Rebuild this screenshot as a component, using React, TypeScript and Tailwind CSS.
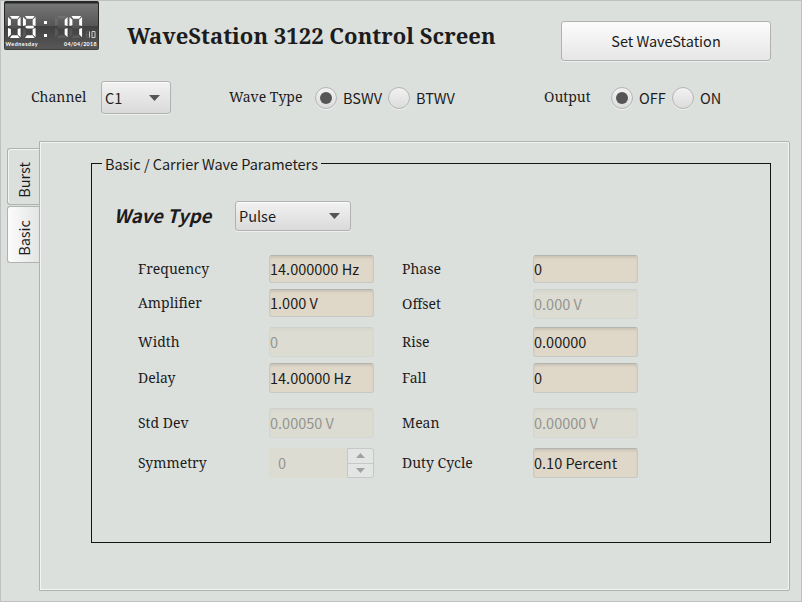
import React from "react";

const serif = "font-['Noto_Serif','Droid_Serif','DejaVu_Serif_Condensed','DejaVu_Serif',serif] [font-stretch:75%]";
const sans = "font-['Noto_Sans_CJK_SC',sans-serif]";

function Label({ text, className = "" }: { text: string; className?: string }) {
  return (
    <span className={`${serif} block whitespace-nowrap text-[14px] leading-5 text-[#1c1c1c] ${className}`}>{text}</span>
  );
}

const segments: Record<string, string> = {
  a: "M3 0H13L11 3H5Z",
  b: "M14 1V11L11 10V4Z",
  c: "M14 13V23L11 20V14Z",
  d: "M3 24H13L11 21H5Z",
  e: "M1 13V23L4 20V14Z",
  f: "M1 1V11L4 10V4Z",
  g: "M3 12L5 10.5H11L13 12L11 13.5H5Z",
};
const lit: Record<string, string> = { "0": "abcdef", "9": "abcdfg", "1": "bc", "7": "abcf" };

function Digit({ value, x }: { value: string; x: number }) {
  return (
    <g transform={`translate(${x} 15) scale(0.97 0.92)`}>
      {Object.keys(segments).map((k) => (
        <path key={k} d={segments[k]} fill="#fff" opacity={lit[value].includes(k) ? 1 : 0.09} />
      ))}
    </g>
  );
}

function Clock() {
  return (
    <svg width="95" height="49" viewBox="0 0 95 49" className="block">
      <defs>
        <linearGradient id="clockTop" x2="0" y2="1">
          <stop offset="0" stopColor="#777" />
          <stop offset="1" stopColor="#555" />
        </linearGradient>
        <linearGradient id="clockBottom" x2="0" y2="1">
          <stop offset="0" stopColor="#404040" />
          <stop offset="1" stopColor="#585858" />
        </linearGradient>
      </defs>
      <rect width="95" height="49" rx="2" fill="#262626" />
      <rect x="1" y="2.5" width="93" height="23" fill="url(#clockTop)" />
      <rect x="0.5" y="25" width="94" height="23.5" rx="1" fill="url(#clockBottom)" />
      <Digit value="0" x={3} />
      <Digit value="9" x={18} />
      <rect x="40" y="20" width="3" height="3" fill="#fff" />
      <rect x="40" y="33" width="3" height="3" fill="#fff" />
      <Digit value="1" x={50} />
      <Digit value="7" x={64.5} />
      <g fill="none" stroke="#ddd" strokeWidth="0.9">
        <path d="M85.5 30.5V36.5" />
        <path d="M88 30.5H91V36.5H88Z" />
        <path d="M82.5 30.5H85M82.5 30.5V36.5H85M82.5 33.5H85" opacity="0.15" />
      </g>
      <text x="1.5" y="44.5" textLength="32" fill="#fff" fontSize="5.3" fontWeight="700" fontFamily="Lato, sans-serif">Wednesday</text>
      <text x="60" y="44.5" textLength="32.5" fill="#fff" fontSize="5.3" fontWeight="700" fontFamily="Lato, sans-serif">04/04/2018</text>
    </svg>
  );
}

function Select({ value, className }: { value: string; className: string }) {
  return (
    <div
      className={`flex items-center justify-between rounded-[3px] border border-[#b0b2b1] bg-linear-to-b from-[#f2f2f2] to-[#dadada] pr-[10px] pl-[3px] shadow-[0_1px_0_#eef0ef,inset_0_1px_0_#fcfcfc] ${className}`}
    >
      <span className={`${sans} text-[14.5px] leading-5 text-[#1c1c1c]`}>{value}</span>
      <svg width="11" height="6" viewBox="0 0 11 6">
        <path d="M0 0H11L5.5 6Z" fill="#555" />
      </svg>
    </div>
  );
}

function Radio({ label, checked, className = "" }: { label: string; checked?: boolean; className?: string }) {
  return (
    <div className={`flex items-center ${className}`}>
      <span className="flex size-[22px] items-center justify-center rounded-full border border-[#b4b6b5] bg-linear-to-b from-[#f2f2f2] to-[#dcdcdc] shadow-[0_1px_0_#eef0ef]">
        {checked && <span className="size-3 rounded-full bg-[#555]" />}
      </span>
      <span className={`${sans} ml-[6px] text-[14.5px] leading-5 whitespace-nowrap text-[#1c1c1c]`}>{label}</span>
    </div>
  );
}

function Field({ value, disabled, className }: { value: string; disabled?: boolean; className: string }) {
  const look = disabled
    ? "border-[#d3d7d2] border-t-[#ced1cc] bg-[#dddcd2] text-[#949590] shadow-[inset_0_2px_2px_#d6d6cd]"
    : "border-[#c8c9c6] border-t-[#b3b4b1] bg-[#dfd7c8] text-[#1c1c1c] shadow-[inset_0_2px_2px_#cdc5b8]";
  return (
    <div className={`${sans} flex w-[105px] items-center rounded-[3px] border text-[14.5px] leading-5 whitespace-nowrap ${look} ${className}`}>
      {value}
    </div>
  );
}

function Spinner({ value }: { value: string }) {
  return (
    <div className="flex h-[30px] w-[105px]">
      <div className={`${sans} flex flex-1 items-center bg-[#dddcd2] pl-[9px] text-[14.5px] leading-5 text-[#949590]`}>{value}</div>
      <div className="flex w-[27px] flex-col rounded-r-[3px] border border-[#c5c8c6] bg-[#e3e5e4]">
        <div className="flex flex-1 items-center justify-center border-b border-[#c5c8c6]">
          <svg width="9" height="5" viewBox="0 0 9 5"><path d="M0 5H9L4.5 0Z" fill="#a0a2a1" /></svg>
        </div>
        <div className="flex flex-1 items-center justify-center">
          <svg width="9" height="5" viewBox="0 0 9 5"><path d="M0 0H9L4.5 5Z" fill="#a0a2a1" /></svg>
        </div>
      </div>
    </div>
  );
}

function Row({ label, children, className = "" }: { label: string; children: React.ReactNode; className?: string }) {
  return (
    <div className={`flex items-center justify-between ${className}`}>
      <Label text={label} />
      {children}
    </div>
  );
}

export default function App() {
  return (
    <div className="flex h-[602px] w-[802px] flex-col overflow-hidden border border-[#bfc1c0] bg-[#dce0dd] text-[#1c1c1c]">
      <header className="flex h-[80px] items-start">
        <div className="ml-[3px]"><Clock /></div>
        <h1 className={`${serif} mt-[19px] ml-[28px] w-[434px] text-[22px] leading-[30px] font-bold tracking-[0.02px] whitespace-nowrap`}>
          WaveStation 3122 Control Screen
        </h1>
        <button
          className={`${sans} mt-[20px] h-10 w-[210px] rounded-[3px] border border-[#b0b2b1] bg-linear-to-b from-[#fcfcfc] to-[#e6e6e6] text-[14.5px] leading-5 shadow-[0_1px_0_#eef0ef]`}
        >
          Set WaveStation
        </button>
      </header>

      <div className="flex h-[60px] items-start">
        <Label text="Channel" className="mt-[6px] ml-[30px] w-[70px]" />
        <Select value="C1" className="h-[33px] w-[70px]" />
        <Label text="Wave Type" className="mt-[6px] ml-[58px] w-[86px]" />
        <Radio label="BSWV" checked className="mt-[6px] w-[73px]" />
        <Radio label="BTWV" className="mt-[6px] w-[156px]" />
        <Label text="Output" className="mt-[6px] w-[67px]" />
        <Radio label="OFF" checked className="mt-[6px] w-[61px]" />
        <Radio label="ON" className="mt-[6px]" />
      </div>

      <div className="flex">
        <nav className="mt-[7px] ml-[6px] flex w-8 flex-col gap-px">
          <div className="flex h-[57px] items-center justify-center rounded-l-[3px] border border-r-0 border-[#b0b2b1] pt-[2px] pl-[2px] shadow-[inset_1px_1px_0_#f2f3f2]">
            <span className={`${sans} -mb-1 rotate-180 pl-[1px] text-[14.5px] leading-5 [writing-mode:vertical-rl]`}>Burst</span>
          </div>
          <div className="flex h-[57px] items-center justify-center rounded-l-[3px] border border-r-0 border-[#b0b2b1] bg-linear-to-r from-[#fcfcfc] to-[#e3e4e4] pt-[2px] pl-[2px]">
            <span className={`${sans} -mb-1 rotate-180 pl-[1px] text-[14.5px] leading-5 [writing-mode:vertical-rl]`}>Basic</span>
          </div>
        </nav>
        <main className="h-[450px] w-[751px] rounded-r-[2px] border border-[#b0b2b1] pt-[11px] pl-[51px] shadow-[inset_1px_1px_0_#f2f3f2,inset_-1px_-1px_0_#f2f3f2]">
          <fieldset className="h-[390px] w-[680px] border border-[#141414]">
            <legend className={`${sans} ml-[10px] h-5 px-[3px] text-[14.5px] leading-[22px] tracking-[-0.035px] whitespace-nowrap`}>
              Basic / Carrier Wave Parameters
            </legend>
            <div className="mt-[28px] ml-[22px] flex h-[30px] items-center">
              <span className={`${sans} mb-[2px] w-[121px] text-[18.5px] leading-6 font-bold whitespace-nowrap italic`}>Wave Type</span>
              <Select value="Pulse" className="h-[30px] w-[116px]" />
            </div>
            <div className="mt-[24px] ml-[46px] flex gap-[28px]">
              <div className="w-[236px]">
                <Row label="Frequency"><Field value="14.000000 Hz" className="h-7" /></Row>
                <Row label="Amplifier" className="mt-[6px]"><Field value="1.000 V" className="h-7" /></Row>
                <Row label="Width" className="mt-[10px]"><Field value="0" disabled className="h-[30px]" /></Row>
                <Row label="Delay" className="mt-[6px]"><Field value="14.00000 Hz" className="h-[30px]" /></Row>
                <Row label="Std Dev" className="mt-[15px]"><Field value="0.00050 V" disabled className="h-[30px]" /></Row>
                <Row label="Symmetry" className="mt-[10px]"><Spinner value="0" /></Row>
              </div>
              <div className="w-[236px]">
                <Row label="Phase"><Field value="0" className="h-7" /></Row>
                <Row label="Offset" className="mt-[6px]"><Field value="0.000 V" disabled className="h-[30px]" /></Row>
                <Row label="Rise" className="mt-[8px]"><Field value="0.00000" className="h-[30px]" /></Row>
                <Row label="Fall" className="mt-[6px]"><Field value="0" className="h-[30px]" /></Row>
                <Row label="Mean" className="mt-[15px]"><Field value="0.00000 V" disabled className="h-[30px]" /></Row>
                <Row label="Duty Cycle" className="mt-[10px]"><Field value="0.10 Percent" className="h-[30px]" /></Row>
              </div>
            </div>
          </fieldset>
        </main>
      </div>
    </div>
  );
}
